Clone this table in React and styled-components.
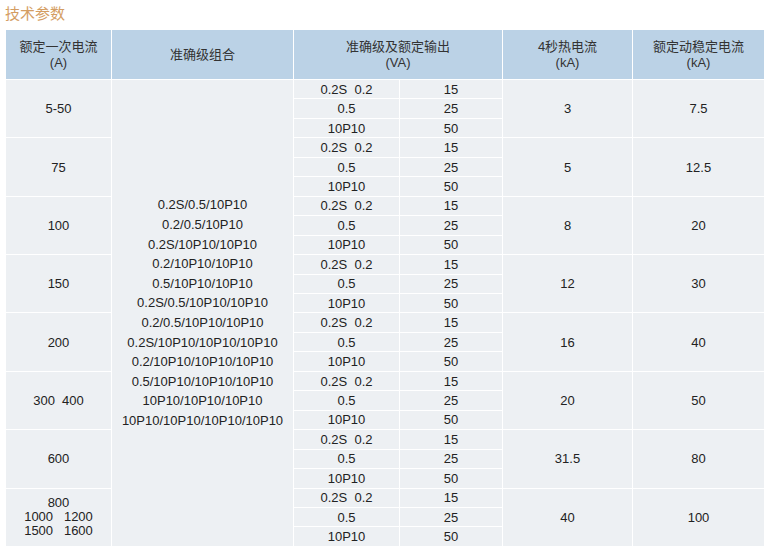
import React from "react";
import styled, { createGlobalStyle } from "styled-components";

const Global = createGlobalStyle`
  html, body { margin: 0; padding: 0; background: #ffffff; }
  body { font-family: "Liberation Sans", "Noto Sans CJK SC", Arial, sans-serif; color: #2b2b2b; }
`;

const Page = styled.div`
  padding: 3px 5px 0 5px;
`;

const Title = styled.h2`
  margin: 0 0 6px 0;
  font-size: 15px;
  line-height: 20px;
  font-weight: normal;
  color: #d49d62;
  font-family: "Noto Sans CJK SC", "Liberation Sans", sans-serif;
`;

const Table = styled.table`
  width: 759px;
  table-layout: fixed;
  border-collapse: collapse;
  font-size: 13px;
`;

const HeadRow = styled.tr`
  height: 50px;
`;

const BodyRow = styled.tr`
  height: 19.46px;
`;

const HeadCell = styled.th`
  background: #bbd2e6;
  border: 1px solid #ffffff;
  font-weight: normal;
  color: #333333;
  line-height: 16px;
  padding: 0;
  text-align: center;
  vertical-align: middle;
  white-space: pre-line;
`;

const Cell = styled.td`
  background: #edf0f3;
  border: 1px solid #ffffff;
  padding: 0;
  text-align: center;
  vertical-align: middle;
  color: #222222;
  white-space: pre;
  line-height: ${(p) => p.$lh || "15px"};
`;

const groups = [
  { a: "5-50", t: "3", d: "7.5" },
  { a: "75", t: "5", d: "12.5" },
  { a: "100", t: "8", d: "20" },
  { a: "150", t: "12", d: "30" },
  { a: "200", t: "16", d: "40" },
  { a: "300  400", t: "20", d: "50" },
  { a: "600", t: "31.5", d: "80" },
  { a: "800\n1000   1200\n1500   1600", t: "40", d: "100", lh: "14px" },
];

const outputs = [
  ["0.2S  0.2", "15"],
  ["0.5", "25"],
  ["10P10", "50"],
];

const combos = [
  "0.2S/0.5/10P10",
  "0.2/0.5/10P10",
  "0.2S/10P10/10P10",
  "0.2/10P10/10P10",
  "0.5/10P10/10P10",
  "0.2S/0.5/10P10/10P10",
  "0.2/0.5/10P10/10P10",
  "0.2S/10P10/10P10/10P10",
  "0.2/10P10/10P10/10P10",
  "0.5/10P10/10P10/10P10",
  "10P10/10P10/10P10",
  "10P10/10P10/10P10/10P10",
];

export default function App() {
  const rows = [];
  groups.forEach((g, gi) => {
    outputs.forEach((o, oi) => {
      rows.push(
        <BodyRow key={`${gi}-${oi}`}>
          {oi === 0 && (
            <Cell rowSpan={3} $lh={g.lh}>
              {g.a}
            </Cell>
          )}
          {gi === 0 && oi === 0 && (
            <Cell rowSpan={24} $lh="19.6px">
              {combos.join("\n")}
            </Cell>
          )}
          <Cell>{o[0]}</Cell>
          <Cell>{o[1]}</Cell>
          {oi === 0 && <Cell rowSpan={3}>{g.t}</Cell>}
          {oi === 0 && <Cell rowSpan={3}>{g.d}</Cell>}
        </BodyRow>
      );
    });
  });

  return (
    <Page>
      <Global />
      <Title>技术参数</Title>
      <Table>
        <colgroup>
          <col style={{ width: 106 }} />
          <col style={{ width: 182 }} />
          <col style={{ width: 106 }} />
          <col style={{ width: 103 }} />
          <col style={{ width: 130 }} />
          <col style={{ width: 132 }} />
        </colgroup>
        <thead>
          <HeadRow>
            <HeadCell>{"额定一次电流\n(A)"}</HeadCell>
            <HeadCell>准确级组合</HeadCell>
            <HeadCell colSpan={2}>{"准确级及额定输出\n(VA)"}</HeadCell>
            <HeadCell>{"4秒热电流\n(kA)"}</HeadCell>
            <HeadCell>{"额定动稳定电流\n(kA)"}</HeadCell>
          </HeadRow>
        </thead>
        <tbody>{rows}</tbody>
      </Table>
    </Page>
  );
}
